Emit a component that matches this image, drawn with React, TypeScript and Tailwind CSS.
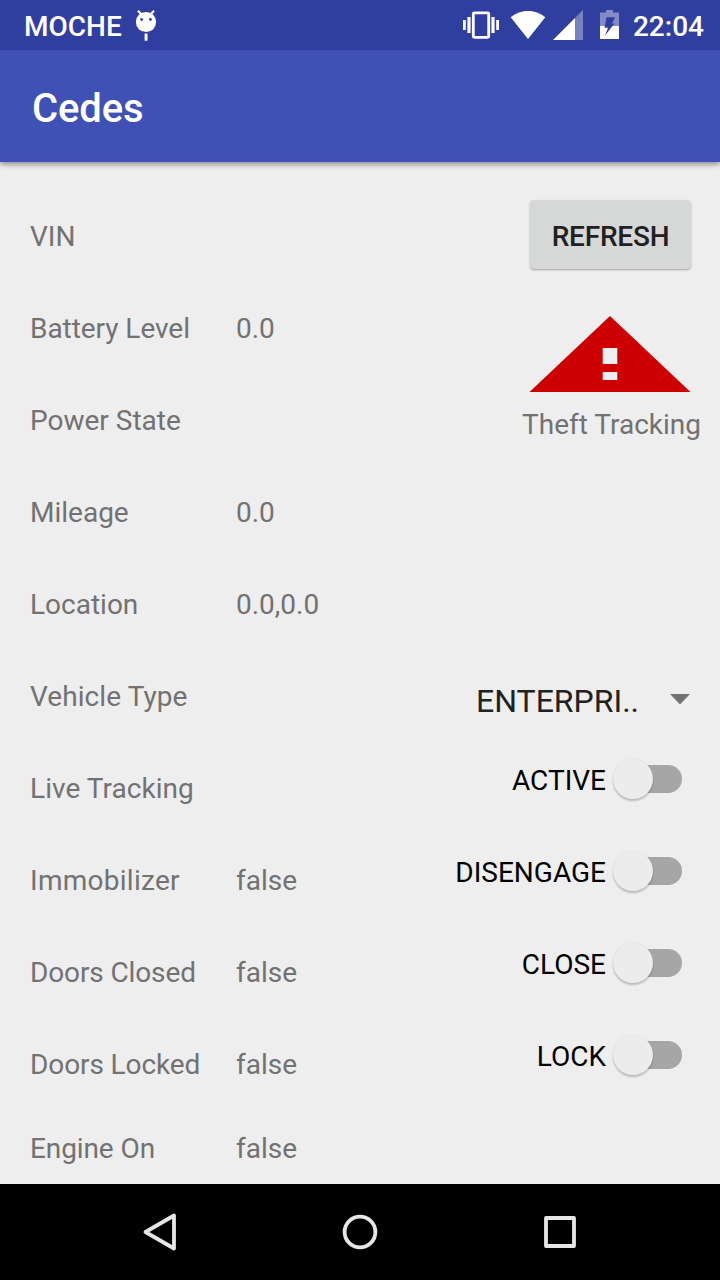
import React from "react";

type Row = { label: string; value?: string; labelClass?: string };

const rows: Row[] = [
  { label: "VIN" },
  { label: "Battery Level", value: "0.0", labelClass: "tracking-[-0.05px]" },
  { label: "Power State" },
  { label: "Mileage", value: "0.0" },
  { label: "Location", value: "0.0,0.0" },
  { label: "Vehicle Type", labelClass: "tracking-[0.08px]" },
  { label: "Live Tracking", labelClass: "tracking-[0.05px]" },
  { label: "Immobilizer", value: "false", labelClass: "tracking-[0.27px]" },
  { label: "Doors Closed", value: "false", labelClass: "tracking-[-0.12px]" },
  { label: "Doors Locked", value: "false", labelClass: "tracking-[-0.1px]" },
  { label: "Engine On", value: "false", labelClass: "tracking-[-0.1px]" },
];

const switches = ["ACTIVE", "DISENGAGE", "CLOSE", "LOCK"];

function StatusBar() {
  return (
    <div className="relative z-20 flex h-[50px] shrink-0 items-center bg-[#303f9f] pl-6 pr-4 text-[28px] font-medium leading-[50px] text-white">
      <span className="pt-[4px]">MOCHE</span>
      <svg className="ml-[12px]" width="24" height="50" viewBox="134 0 24 50">
        <circle cx="146" cy="22" r="10.1" fill="#fff" />
        <path d="M138 10.800l4 4.200M154 10.800l-4 4.200" stroke="#fff" strokeWidth="2.2" />
        <rect x="144.600" y="33.5" width="2.900" height="7.2" fill="#fff" />
        <circle cx="141.6" cy="19.5" r="1.4" fill="#303f9f" />
        <circle cx="150.4" cy="19.5" r="1.4" fill="#303f9f" />
      </svg>
      <svg className="ml-auto" width="170" height="50" viewBox="456 0 170 50" fill="#fff">
        <path d="M463 20h2.8v10H463zM467.4 17h3.2v16h-3.2zM491.4 17h3.2v16h-3.2zM496.2 20h2.8v10h-2.8z" />
        <rect x="473.3" y="12.9" width="15.4" height="24.4" rx="1" fill="none" stroke="#fff" strokeWidth="2.8" />
        <path d="M510.7 17.3C515 13.5 521 11 528 11s13 2.500 17.300 6.300L528 39z" />
        <path d="M583 10v30h-8V18z" fillOpacity=".35" />
        <path d="M575 18v22h-22z" />
        <path d="M606 10h7v2.500h6V26h-19V12.500h6z" fillOpacity=".4" />
        <path d="M600 26h19v13h-19z" />
        <path d="M606.500 17.300h8.500l-3 6.200h2.500L605 35.500l3-7.800h-3.500z" fill="#303f9f" />
      </svg>
      <span className="ml-[7px] pt-[4px]">22:04</span>
    </div>
  );
}

function SwitchRow({ label }: { label: string }) {
  return (
    <div className="flex h-[92px] items-center justify-end pr-[38px] text-black">
      <span className="mr-[7px] pt-[4px]">{label}</span>
      <div className="flex h-[28px] w-[69px] items-center">
        <div className="z-10 size-[40px] shrink-0 rounded-full bg-[#ececec] shadow-[0_2px_2px_rgba(0,0,0,0.22),0_0_1px_rgba(0,0,0,0.08)]" />
        <div className="-ml-[20px] h-[28px] w-[49px] rounded-r-full bg-[#a6a6a6]" />
      </div>
    </div>
  );
}

export default function App() {
  return (
    <div className="flex h-[1280px] w-[720px] flex-col overflow-hidden bg-[#eeeeee] font-['Roboto',sans-serif]">
      <StatusBar />
      <header className="z-10 flex h-[112px] shrink-0 items-center bg-[#3f51b5] pl-8 pt-[6px] text-[40px] font-medium tracking-[-0.15px] text-white shadow-[0_2px_6px_rgba(0,0,0,0.45)]">
        Cedes
      </header>
      <main className="flex h-[1022px] shrink-0 text-[28px] leading-[38px] text-[#727272]">
        <div className="w-[400px] pt-[29px] pl-[30px]">
          {rows.map((r) => (
            <div key={r.label} className="flex h-[92px] items-center last:h-[76px]">
              <span className={"w-[206px] shrink-0 " + (r.labelClass ?? "")}>{r.label}</span>
              <span>{r.value}</span>
            </div>
          ))}
        </div>
        <div className="flex w-[320px] flex-col pt-[38px]">
          <button className="mr-[29px] flex h-[69px] w-[161px] items-center justify-center self-end rounded-[4px] bg-[#d6d8d7] pt-[5px] font-medium tracking-[-0.2px] text-[#202020] shadow-[0_1px_2px_rgba(0,0,0,0.32)]">
            REFRESH
          </button>
          <svg className="mr-[29px] mt-[47px] self-end" width="162" height="76" viewBox="0 0 162 76">
            <path d="M81 0L161.500 76H.5z" fill="#cc0000" />
            <path d="M73.700 32h14.600v16H73.700zM73.700 56h14.600v8H73.700z" fill="#eeeeee" />
          </svg>
          <div className="mr-[19px] mt-[14px] self-end">Theft Tracking</div>
          <div className="mt-[209px] flex h-[92px] items-center pl-[76px] pr-[29px] text-[32px] text-[#212121]">
            <span className="pt-[4px]">ENTERPRI..</span>
            <svg className="ml-auto" width="22" height="12" viewBox="0 0 22 12">
              <path d="M1 1h20L11 11.500z" fill="#727272" />
            </svg>
          </div>
          <div className="-mt-[12px]">
            {switches.map((s) => (
              <SwitchRow key={s} label={s} />
            ))}
          </div>
        </div>
      </main>
      <nav className="flex h-[96px] shrink-0 items-center justify-center gap-[140px] bg-black">
        {["back", "home", "recent"].map((k) => (
          <svg key={k} width="60" height="60" viewBox="0 0 60 60" fill="none" stroke="#e6e6e6" strokeWidth="3.800" strokeLinejoin="round">
            {k === "back" && <path d="M15.500 30L44 13.500v33z" />}
            {k === "home" && <circle cx="30" cy="30" r="15.400" />}
            {k === "recent" && <rect x="16" y="16" width="28" height="28" />}
          </svg>
        ))}
      </nav>
    </div>
  );
}
